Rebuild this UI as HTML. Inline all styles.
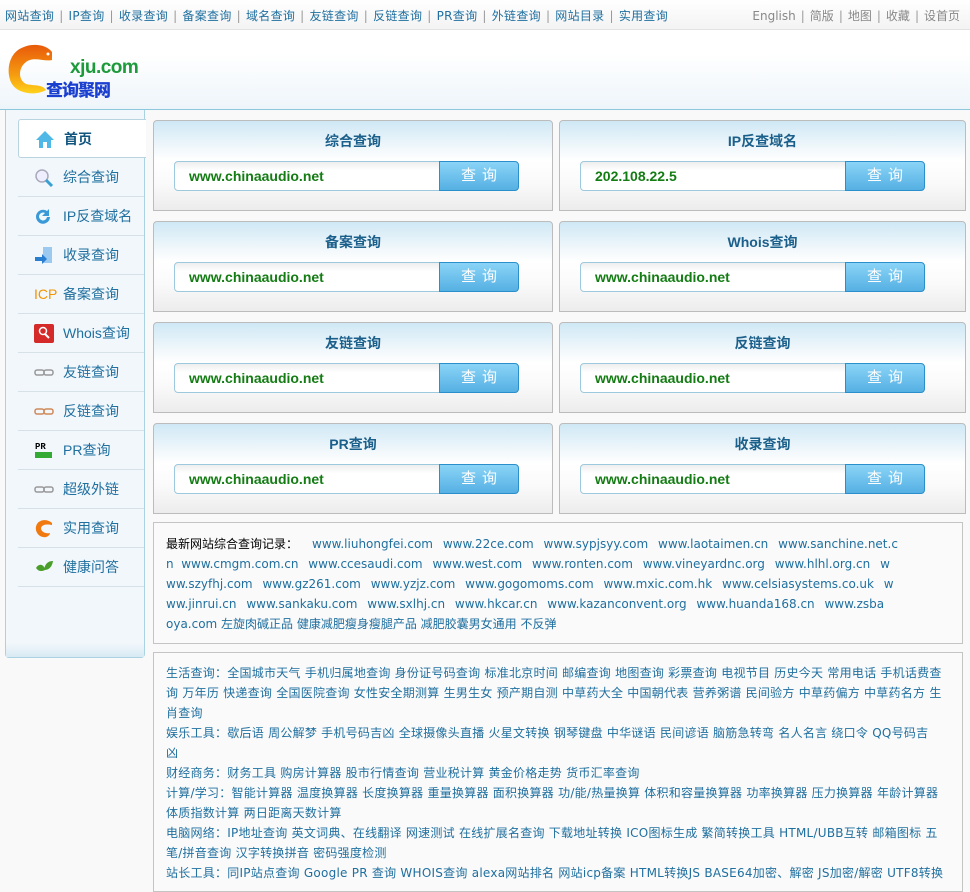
<!DOCTYPE html>
<html><head><meta charset="utf-8"><style>
*{margin:0;padding:0;box-sizing:border-box}
body{width:970px;height:882px;overflow:hidden;background:#f9f9f9;font-family:"DejaVu Sans","Noto Sans CJK SC",sans-serif;font-size:12px;color:#1f6f9f;position:relative}
.abs{position:absolute}
#top{left:0;top:0;width:970px;height:30px;background:linear-gradient(#fff,#f3f3f3);border-bottom:1px solid #e3e3e3}
#top .l{left:5px;top:7px;font-size:12px;color:#1f6f9f;white-space:nowrap;letter-spacing:0.3px}
#top .r{right:10px;top:7px;font-size:12px;color:#888;white-space:nowrap}
.sep{color:#999;margin:0 5px}
#hd{left:0;top:30px;width:970px;height:80px;background:linear-gradient(#fff 30%,#eef5fa);border-bottom:1px solid #8cc7db}
#side{left:5px;top:110px;width:140px;height:548px;background:#f2f7fb;border:1px solid #a9d2e2;border-top:none;border-radius:0 0 4px 4px}
#side .foot{position:absolute;left:0;bottom:0;width:138px;height:14px;background:linear-gradient(#f2f7fb,#d8eaf4)}
.it{position:absolute;left:12px;width:126px;height:39px;border-bottom:1px solid #d6e1e8;font-size:14px;color:#1f6f9f;line-height:38px;padding-left:45px;font-family:"Liberation Sans","Noto Sans CJK SC",sans-serif}
.it .ic{position:absolute;left:16px;top:10px;width:20px;height:19px}
.home{background:#fff;border:1px solid #b9d3df;border-right:none;border-radius:3px 0 0 3px;color:#12557f;font-weight:bold;left:12px;width:128px}
.pn{position:absolute;width:400px;height:91px;border:1px solid #bcbcbc;border-radius:4px 4px 0 0;background:linear-gradient(#cfe8f5,#f6fafc 35%,#fff 45%,#fafafa 70%,#ececec);font-family:"Liberation Sans","Noto Sans CJK SC",sans-serif}
.pn h3{text-align:center;font-size:14px;color:#1b5f8b;margin-top:10px;height:20px;line-height:20px}
.pn .in{position:absolute;left:20px;top:40px;width:266px;height:30px;border:1px solid #9cc9dd;border-radius:4px 0 0 4px;background:linear-gradient(#eee,#fff 30%);color:#137c13;font-weight:bold;font-size:14px;line-height:28px;padding-left:14px}
.pn .bt{position:absolute;left:285px;top:40px;width:80px;height:30px;border:1px solid #2a8fcb;border-radius:0 4px 4px 0;background:linear-gradient(#8ad4f7,#55b0e3);color:#fff;font-size:15px;text-align:center;line-height:28px;letter-spacing:6px;padding-left:6px}
.box{position:absolute;left:153px;width:810px;border:1px solid #c4c4c4;background:#fafafa;overflow:hidden}
.ln{position:absolute;left:12px;width:786px;overflow:hidden;white-space:nowrap;height:20px;line-height:20px;color:#1f6f9f}
.ln span{margin-right:6px}
.tools .ln{letter-spacing:0.25px}
</style></head><body>
<div id="top" class="abs">
<div class="l abs">网站查询<span class="sep">|</span>IP查询<span class="sep">|</span>收录查询<span class="sep">|</span>备案查询<span class="sep">|</span>域名查询<span class="sep">|</span>友链查询<span class="sep">|</span>反链查询<span class="sep">|</span>PR查询<span class="sep">|</span>外链查询<span class="sep">|</span>网站目录<span class="sep">|</span>实用查询</div>
<div class="r abs">English<span class="sep">|</span>简版<span class="sep">|</span>地图<span class="sep">|</span>收藏<span class="sep">|</span>设首页</div>
</div>
<div id="hd" class="abs">
<svg class="abs" style="left:6px;top:14px" width="50" height="52" viewBox="0 0 50 52"><defs><linearGradient id="g" x1="0" y1="0" x2="0" y2="1"><stop offset="0" stop-color="#e85a0a"/><stop offset=".6" stop-color="#f59a10"/><stop offset="1" stop-color="#ffd21a"/></linearGradient></defs><path d="M46 8C40 0 24 -2 12 6 2 13 0 30 6 40 12 50 30 52 40 46 36 40 28 42 20 40 12 36 12 24 20 18 28 12 38 18 46 16Z" fill="url(#g)"/><circle cx="42" cy="10" r="1.5" fill="#fff"/></svg>
<div class="abs" style="left:70px;top:27px;font-size:19px;color:#1d9a3a;font-weight:bold;letter-spacing:-0.5px;font-family:'Liberation Sans',sans-serif">xju.com</div>
<div class="abs" style="left:46px;top:46px;font-size:17px;color:#1b3fcf;font-weight:900;letter-spacing:-1px">查询聚网</div>
</div>
<div id="side" class="abs">
<div class="foot"></div>
<div class="it home" style="top:9px"><svg class="ic" viewBox="0 0 20 19"><path d="M10 1L1 10h3v8h12v-8h3z" fill="#4fb8e6"/><rect x="8" y="12" width="4" height="6" fill="#fff"/></svg>首页</div>
<div class="it" style="top:48px"><svg class="ic" viewBox="0 0 20 19"><circle cx="8" cy="8" r="6" fill="#eef" stroke="#aab" stroke-width="1.5"/><path d="M12 12l6 6" stroke="#3aa0d0" stroke-width="3"/></svg>综合查询</div>
<div class="it" style="top:87px"><svg class="ic" viewBox="0 0 20 19"><path d="M16 10a7 7 0 1 1-3-6l2-2v7h-7l3-3a4 4 0 1 0 2 4z" fill="#3a9ad8"/></svg>IP反查域名</div>
<div class="it" style="top:126px"><svg class="ic" viewBox="0 0 20 19"><rect x="9" y="1" width="9" height="16" fill="#9cc9f0"/><path d="M1 11h7v-3l5 5-5 5v-3H1z" fill="#2a7ed0"/></svg>收录查询</div>
<div class="it" style="top:165px"><span class="ic" style="color:#f29400;font-size:14px;line-height:19px;top:10px">ICP</span>备案查询</div>
<div class="it" style="top:204px"><svg class="ic" viewBox="0 0 20 19"><rect width="20" height="19" rx="2" fill="#d42a2a"/><circle cx="9" cy="7" r="3.5" fill="none" stroke="#fff" stroke-width="1.5"/><path d="M11 10l4 4" stroke="#fff" stroke-width="2"/></svg>Whois查询</div>
<div class="it" style="top:243px"><svg class="ic" viewBox="0 0 20 19"><rect x="1" y="7" width="9" height="5" rx="2" fill="none" stroke="#999" stroke-width="1.5"/><rect x="10" y="7" width="9" height="5" rx="2" fill="none" stroke="#999" stroke-width="1.5"/></svg>友链查询</div>
<div class="it" style="top:282px"><svg class="ic" viewBox="0 0 20 19"><rect x="1" y="7" width="9" height="5" rx="2" fill="none" stroke="#d08a5a" stroke-width="1.5"/><rect x="10" y="7" width="9" height="5" rx="2" fill="none" stroke="#d08a5a" stroke-width="1.5"/></svg>反链查询</div>
<div class="it" style="top:321px"><svg class="ic" viewBox="0 0 20 19"><text x="1" y="8" font-size="9" font-family="Liberation Mono" font-weight="bold" fill="#000">PR</text><rect x="1" y="11" width="17" height="6" fill="#3a3"/></svg>PR查询</div>
<div class="it" style="top:360px"><svg class="ic" viewBox="0 0 20 19"><rect x="1" y="7" width="9" height="5" rx="2" fill="none" stroke="#999" stroke-width="1.5"/><rect x="10" y="7" width="9" height="5" rx="2" fill="none" stroke="#999" stroke-width="1.5"/></svg>超级外链</div>
<div class="it" style="top:399px"><svg class="ic" viewBox="0 0 20 19"><path d="M18 4C14 0 6 0 3 5 0 10 3 17 9 18 13 19 16 16 16 14 12 15 7 13 7 9 8 5 14 5 18 6z" fill="#f07a10"/></svg>实用查询</div>
<div class="it" style="top:438px"><svg class="ic" viewBox="0 0 20 19"><path d="M2 10c3-5 8-4 9 2-4 2-7 1-9-2zM10 12c1-7 5-9 9-9-1 6-4 9-9 9z" fill="#4a9e2a"/></svg>健康问答</div>
</div>

<div class="pn" style="left:153px;top:120px"><h3>综合查询</h3><div class="in">www.chinaaudio.net</div><div class="bt">查询</div></div>
<div class="pn" style="left:559px;top:120px;width:407px"><h3>IP反查域名</h3><div class="in">202.108.22.5</div><div class="bt">查询</div></div>
<div class="pn" style="left:153px;top:221px"><h3>备案查询</h3><div class="in">www.chinaaudio.net</div><div class="bt">查询</div></div>
<div class="pn" style="left:559px;top:221px;width:407px"><h3>Whois查询</h3><div class="in">www.chinaaudio.net</div><div class="bt">查询</div></div>
<div class="pn" style="left:153px;top:322px"><h3>友链查询</h3><div class="in">www.chinaaudio.net</div><div class="bt">查询</div></div>
<div class="pn" style="left:559px;top:322px;width:407px"><h3>反链查询</h3><div class="in">www.chinaaudio.net</div><div class="bt">查询</div></div>
<div class="pn" style="left:153px;top:423px"><h3>PR查询</h3><div class="in">www.chinaaudio.net</div><div class="bt">查询</div></div>
<div class="pn" style="left:559px;top:423px;width:407px"><h3>收录查询</h3><div class="in">www.chinaaudio.net</div><div class="bt">查询</div></div>

<div class="box" style="top:522px;height:122px">
<div class="ln" style="top:11px"><b style="color:#000;font-weight:normal;margin-right:14px">最新网站综合查询记录：</b><span>www.liuhongfei.com</span> <span>www.22ce.com</span> <span>www.sypjsyy.com</span> <span>www.laotaimen.cn</span> <span>www.sanchine.net.c</span></div>
<div class="ln" style="top:31px">n <span>&nbsp;www.cmgm.com.cn</span> <span>www.ccesaudi.com</span> <span>www.west.com</span> <span>www.ronten.com</span> <span>www.vineyardnc.org</span> <span>www.hlhl.org.cn</span> w</div>
<div class="ln" style="top:51px"><span>ww.szyfhj.com</span> <span>www.gz261.com</span> <span>www.yzjz.com</span> <span>www.gogomoms.com</span> <span>www.mxic.com.hk</span> <span>www.celsiasystems.co.uk</span> w</div>
<div class="ln" style="top:71px"><span>ww.jinrui.cn</span> <span>www.sankaku.com</span> <span>www.sxlhj.cn</span> <span>www.hkcar.cn</span> <span>www.kazanconvent.org</span> <span>www.huanda168.cn</span> www.zsba</div>
<div class="ln" style="top:91px">oya.com 左旋肉碱正品 健康减肥瘦身瘦腿产品 减肥胶囊男女通用 不反弹</div>
</div>

<div class="box tools" style="top:652px;height:240px">
<div class="ln" style="top:10px">生活查询：全国城市天气 手机归属地查询 身份证号码查询 标准北京时间 邮编查询 地图查询 彩票查询 电视节目 历史今天 常用电话 手机话费查</div>
<div class="ln" style="top:30px">询 万年历 快递查询 全国医院查询 女性安全期测算 生男生女 预产期自测 中草药大全 中国朝代表 营养粥谱 民间验方 中草药偏方 中草药名方 生</div>
<div class="ln" style="top:50px">肖查询</div>
<div class="ln" style="top:70px">娱乐工具：歇后语 周公解梦 手机号码吉凶 全球摄像头直播 火星文转换 钢琴键盘 中华谜语 民间谚语 脑筋急转弯 名人名言 绕口令 QQ号码吉</div>
<div class="ln" style="top:90px">凶</div>
<div class="ln" style="top:110px">财经商务：财务工具 购房计算器 股市行情查询 营业税计算 黄金价格走势 货币汇率查询</div>
<div class="ln" style="top:130px">计算/学习：智能计算器 温度换算器 长度换算器 重量换算器 面积换算器 功/能/热量换算 体积和容量换算器 功率换算器 压力换算器 年龄计算器</div>
<div class="ln" style="top:150px">体质指数计算 两日距离天数计算</div>
<div class="ln" style="top:170px">电脑网络：IP地址查询 英文词典、在线翻译 网速测试 在线扩展名查询 下载地址转换 ICO图标生成 繁简转换工具 HTML/UBB互转 邮箱图标 五</div>
<div class="ln" style="top:190px">笔/拼音查询 汉字转换拼音 密码强度检测</div>
<div class="ln" style="top:210px">站长工具：同IP站点查询 Google PR 查询 WHOIS查询 alexa网站排名 网站icp备案 HTML转换JS BASE64加密、解密 JS加密/解密 UTF8转换</div>
</div>
</body></html>
